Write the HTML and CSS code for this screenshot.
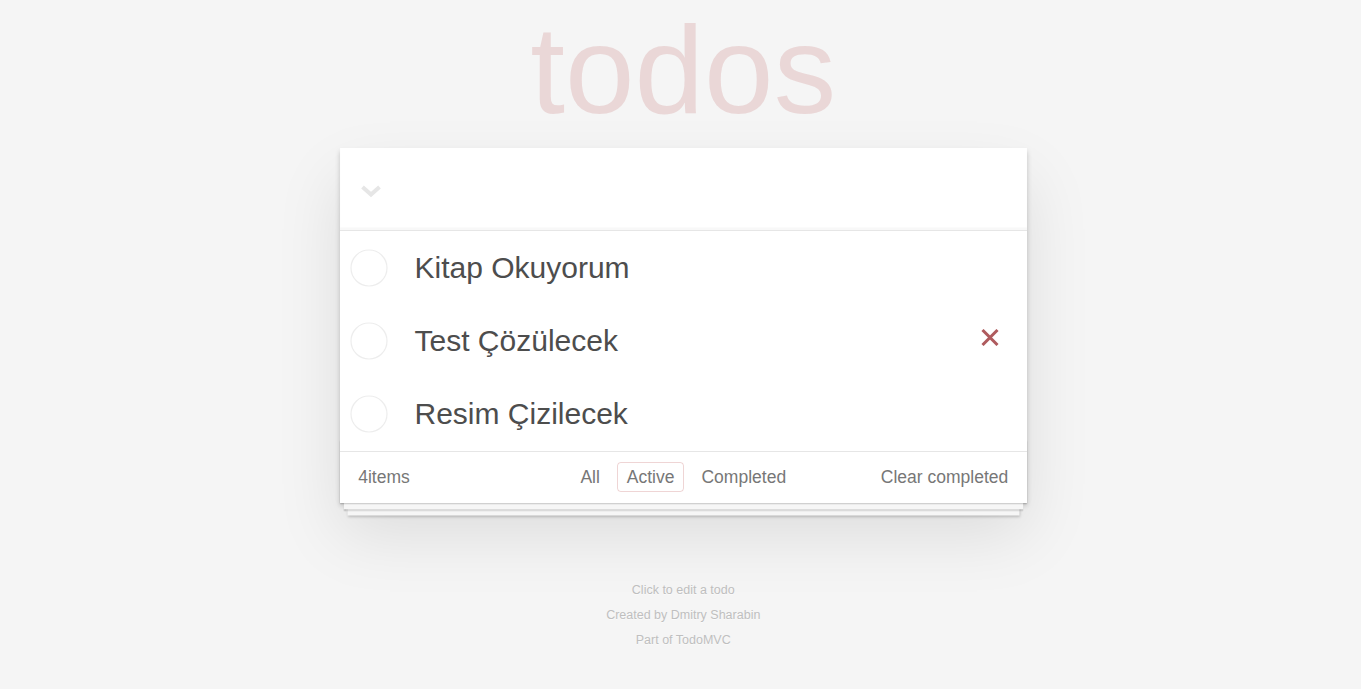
FILE: index.html
```html
<!DOCTYPE html>
<html lang="tr">
<head>
<meta charset="utf-8">
<title>todos</title>
<link rel="stylesheet" href="styles.css">
</head>
<body>
<div class="page">
  <h1 class="title">todos</h1>
  <section class="todoapp">
    <header class="header">
      <span class="toggle-all">
        <svg width="22" height="14" viewBox="0 0 22 14"><polyline points="2.5,3 11,10.5 19.5,3" fill="none" stroke="#e6e6e6" stroke-width="4"/></svg>
      </span>
      <input class="new-todo" type="text" aria-label="Yeni görev">
    </header>
    <section class="main">
      <ul class="todo-list">
        <li class="todo">
          <span class="check"><svg width="38" height="38" viewBox="0 0 38 38"><circle cx="19" cy="19" r="18" fill="none" stroke="#ededed" stroke-width="1.2"/></svg></span>
          <label class="todo-label">Kitap Okuyorum</label>
        </li>
        <li class="todo">
          <span class="check"><svg width="38" height="38" viewBox="0 0 38 38"><circle cx="19" cy="19" r="18" fill="none" stroke="#ededed" stroke-width="1.2"/></svg></span>
          <label class="todo-label">Test Çözülecek</label>
          <span class="destroy"><svg width="18" height="17" viewBox="0 0 18 17"><path d="M1.5 1 L16.5 16 M16.5 1 L1.5 16" stroke="#af5b5e" stroke-width="3" fill="none"/></svg></span>
        </li>
        <li class="todo">
          <span class="check"><svg width="38" height="38" viewBox="0 0 38 38"><circle cx="19" cy="19" r="18" fill="none" stroke="#ededed" stroke-width="1.2"/></svg></span>
          <label class="todo-label">Resim Çizilecek</label>
        </li>
      </ul>
    </section>
    <footer class="footer">
      <span class="todo-count">4items</span>
      <ul class="filters">
        <li><a class="filter">All</a></li>
        <li><a class="filter selected">Active</a></li>
        <li><a class="filter">Completed</a></li>
      </ul>
      <span class="clear-completed">Clear completed</span>
    </footer>
  </section>
  <footer class="info">
    <p>Click to edit a todo</p>
    <p>Created by Dmitry Sharabin</p>
    <p>Part of TodoMVC</p>
  </footer>
</div>
</body>
</html>
```

FILE: styles.css
```css
html, body {
  margin: 0;
  padding: 0;
}
body {
  background: #f5f5f5;
  color: #4d4d4d;
  font-family: "Liberation Sans", Arial, Helvetica, sans-serif;
  font-size: 17.5px;
  padding-left: 5.5px;
}
.page {
  max-width: 687.5px;
  margin: 0 auto;
}
.title {
  margin: 0 0 8px;
  font-size: 125px;
  line-height: 140px;
  font-weight: normal;
  text-align: center;
  color: rgba(175, 47, 47, 0.15);
}
.todoapp {
  background: #fff;
  position: relative;
  box-shadow: 0 2.5px 5px 0 rgba(0, 0, 0, 0.2), 0 31.25px 62.5px 0 rgba(0, 0, 0, 0.1);
}
.header {
  height: 82px;
  display: flex;
  align-items: center;
  box-shadow: inset 0 -2.5px 1.25px rgba(0, 0, 0, 0.03);
}
.toggle-all {
  display: flex;
  margin-left: 20px;
  margin-top: 4px;
}
.new-todo {
  flex: 1;
  border: 0;
  background: transparent;
  height: 60px;
  margin-left: 33px;
  font: inherit;
  font-size: 30px;
  outline: none;
}
.main {
  border-top: 1px solid #e6e6e6;
}
.todo-list {
  list-style: none;
  margin: 0;
  padding: 0;
}
.todo {
  display: flex;
  align-items: center;
  height: 73.3px;
}
.check {
  display: flex;
  margin-left: 10px;
  width: 38px;
}
.todo-label {
  flex: 1;
  font-size: 30px;
  line-height: 36px;
  padding-left: 27px;
  color: #4d4d4d;
}
.destroy {
  display: flex;
  margin-right: 28px;
  margin-bottom: 6px;
}
.footer {
  position: relative;
  border-top: 1px solid #e6e6e6;
  height: 25px;
  padding: 10.5px 18.75px 15.5px;
  color: #777;
  display: grid;
  grid-template-columns: 1fr auto 1fr;
  align-items: center;
  line-height: 25px;
}
.footer::before {
  content: '';
  position: absolute;
  right: 0;
  bottom: 0;
  left: 0;
  height: 62.5px;
  overflow: hidden;
  pointer-events: none;
  box-shadow: 0 1.25px 1.25px rgba(0, 0, 0, 0.2),
    0 10px 0 -3.75px #f6f6f6,
    0 11.25px 1.25px -3.75px rgba(0, 0, 0, 0.2),
    0 20px 0 -7.5px #f6f6f6,
    0 21.25px 2.5px -7.5px rgba(0, 0, 0, 0.2);
}
.todo-count {
  justify-self: start;
}
.filters {
  list-style: none;
  margin: 0;
  padding: 0;
  display: flex;
  gap: 7.5px;
}
.filter {
  display: block;
  line-height: 20px;
  padding: 3.75px 8.75px;
  border: 1.25px solid transparent;
  border-radius: 3.75px;
  color: inherit;
}
.filter.selected {
  border-color: rgba(175, 47, 47, 0.2);
}
.clear-completed {
  justify-self: end;
}
.info {
  margin-top: 81px;
  color: #bfbfbf;
  font-size: 12.5px;
  text-align: center;
  text-shadow: 0 1px 0 rgba(255, 255, 255, 0.5);
}
.info p {
  margin: 12.5px 0;
  line-height: 1;
}
.info p:first-child {
  margin-top: 0;
}
```
